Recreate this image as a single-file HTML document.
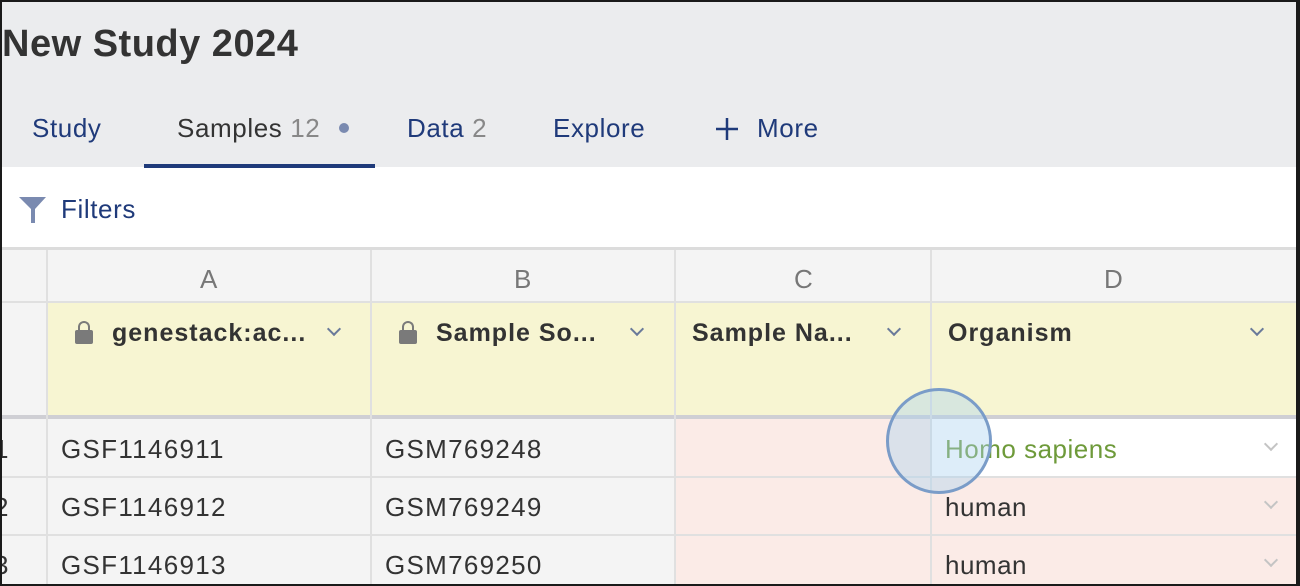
<!DOCTYPE html>
<html><head><meta charset="utf-8"><style>
*{margin:0;padding:0;box-sizing:border-box}
html,body{width:1300px;height:586px;overflow:hidden;background:#1a1a1a;font-family:"Liberation Sans",sans-serif}
#f{position:absolute;left:2px;top:2px;width:1294px;height:582px;background:#fff;overflow:hidden}
.hd{position:absolute;left:0;top:0;width:100%;height:165px;background:#ebecee}
.t{position:absolute;left:0;top:21px;font-size:38px;font-weight:bold;color:#333;letter-spacing:0.5px}
.tab{position:absolute;top:111px;font-size:26px;color:#1f3a7a;letter-spacing:0.6px}
.g{color:#888}
.ul{position:absolute;left:142px;top:162px;width:231px;height:4px;background:#1f3a7a}
.a{position:absolute}
.txt{position:absolute;font-size:26px;color:#333;letter-spacing:1.3px}
.hdr{position:absolute;font-size:25px;font-weight:bold;color:#333;letter-spacing:1px}
.chev{position:absolute;width:10px;height:10px;border-right:2px solid #6a7a9a;border-bottom:2px solid #6a7a9a;transform:rotate(45deg)}
.chev.l{border-color:#c4c4c4}
.lock{position:absolute;width:18px;height:14px;background:#7a7a7a;border-radius:2px}
.lock:before{content:"";position:absolute;left:3px;top:-9px;width:8px;height:10px;border:2px solid #7a7a7a;border-bottom:none;border-radius:6px 6px 0 0}
</style></head><body><div id="f">
<div class="hd"></div>
<div class="t">New Study 2024</div>
<div class="tab" style="left:30px">Study</div>
<div class="tab" style="left:175px;color:#333">Samples <span class="g">12</span></div>
<div class="a" style="left:337px;top:121px;width:10px;height:10px;border-radius:50%;background:#7a8ab0"></div>
<div class="tab" style="left:405px">Data <span class="g">2</span></div>
<div class="tab" style="left:551px">Explore</div>
<svg class="a" style="left:713px;top:115px" width="24" height="24" viewBox="0 0 24 24"><path d="M12 1V23M1 12H23" stroke="#1f3a7a" stroke-width="2.5"/></svg>
<div class="tab" style="left:755px">More</div>
<div class="ul"></div>
<svg class="a" style="left:16px;top:194px" width="30" height="28" viewBox="0 0 30 28"><path d="M1 1H28L17 13V27H13V13Z" fill="#7a8ab0"/></svg>
<div class="tab" style="left:59px;top:192px">Filters</div>
<div class="a" style="left:0;top:245px;width:100%;height:3px;background:#dcdcdc"></div>
<div class="a" style="left:0;top:248px;width:100%;height:53px;background:#f4f4f4;border-bottom:2px solid #e0e0e0"></div>
<div class="a" style="left:45px;top:301px;width:1250px;height:112px;background:#f7f5d2"></div>
<div class="a" style="left:0;top:301px;width:45px;height:112px;background:#f4f4f4"></div>
<div class="a" style="left:0;top:413px;width:100%;height:4px;background:#cfcfd4"></div>
<div class="a" style="left:0;top:417px;width:673px;height:170px;background:#f4f4f4"></div>
<div class="a" style="left:673px;top:417px;width:260px;height:170px;background:#fbebe7"></div>
<div class="a" style="left:929px;top:417px;width:366px;height:58px;background:#fff"></div>
<div class="a" style="left:929px;top:475px;width:366px;height:112px;background:#fbebe7"></div>
<div class="a" style="left:44px;top:248px;width:2px;height:340px;background:#e0e0e0"></div>
<div class="a" style="left:368px;top:248px;width:2px;height:340px;background:#e0e0e0"></div>
<div class="a" style="left:672px;top:248px;width:2px;height:340px;background:#e0e0e0"></div>
<div class="a" style="left:928px;top:248px;width:2px;height:340px;background:#e0e0e0"></div>
<div class="a" style="left:0;top:474px;width:100%;height:2px;background:#e0e0e0"></div>
<div class="a" style="left:0;top:532px;width:100%;height:2px;background:#e0e0e0"></div>
<div class="txt" style="left:198px;top:262px;color:#777;letter-spacing:0">A</div>
<div class="txt" style="left:512px;top:262px;color:#777;letter-spacing:0">B</div>
<div class="txt" style="left:792px;top:262px;color:#777;letter-spacing:0">C</div>
<div class="txt" style="left:1102px;top:262px;color:#777;letter-spacing:0">D</div>
<div class="lock" style="left:73px;top:328px"></div>
<div class="hdr" style="left:110px;top:317px">genestack:ac...</div>
<div class="chev" style="left:327px;top:322px"></div>
<div class="lock" style="left:397px;top:328px"></div>
<div class="hdr" style="left:434px;top:317px">Sample So...</div>
<div class="chev" style="left:630px;top:322px"></div>
<div class="hdr" style="left:690px;top:317px">Sample Na...</div>
<div class="chev" style="left:887px;top:322px"></div>
<div class="hdr" style="left:946px;top:317px">Organism</div>
<div class="chev" style="left:1250px;top:322px"></div>
<div class="txt" style="left:-8px;top:432px">1</div>
<div class="txt" style="left:-8px;top:490px">2</div>
<div class="txt" style="left:-8px;top:548px">3</div>
<div class="txt" style="left:59px;top:432px">GSF1146911</div>
<div class="txt" style="left:59px;top:490px">GSF1146912</div>
<div class="txt" style="left:59px;top:548px">GSF1146913</div>
<div class="txt" style="left:383px;top:432px">GSM769248</div>
<div class="txt" style="left:383px;top:490px">GSM769249</div>
<div class="txt" style="left:383px;top:548px">GSM769250</div>
<div class="txt" style="left:943px;top:432px;color:#6e9a3a;letter-spacing:0.5px">Homo sapiens</div>
<div class="txt" style="left:943px;top:490px;letter-spacing:0.5px">human</div>
<div class="txt" style="left:943px;top:548px;letter-spacing:0.5px">human</div>
<div class="chev l" style="left:1264px;top:437px"></div>
<div class="chev l" style="left:1264px;top:495px"></div>
<div class="chev l" style="left:1264px;top:553px"></div>
<div class="a" style="left:884px;top:386px;width:106px;height:106px;border-radius:50%;border:3px solid #7a9cc8;background:rgba(170,210,240,0.4)"></div>
</div></body></html>
